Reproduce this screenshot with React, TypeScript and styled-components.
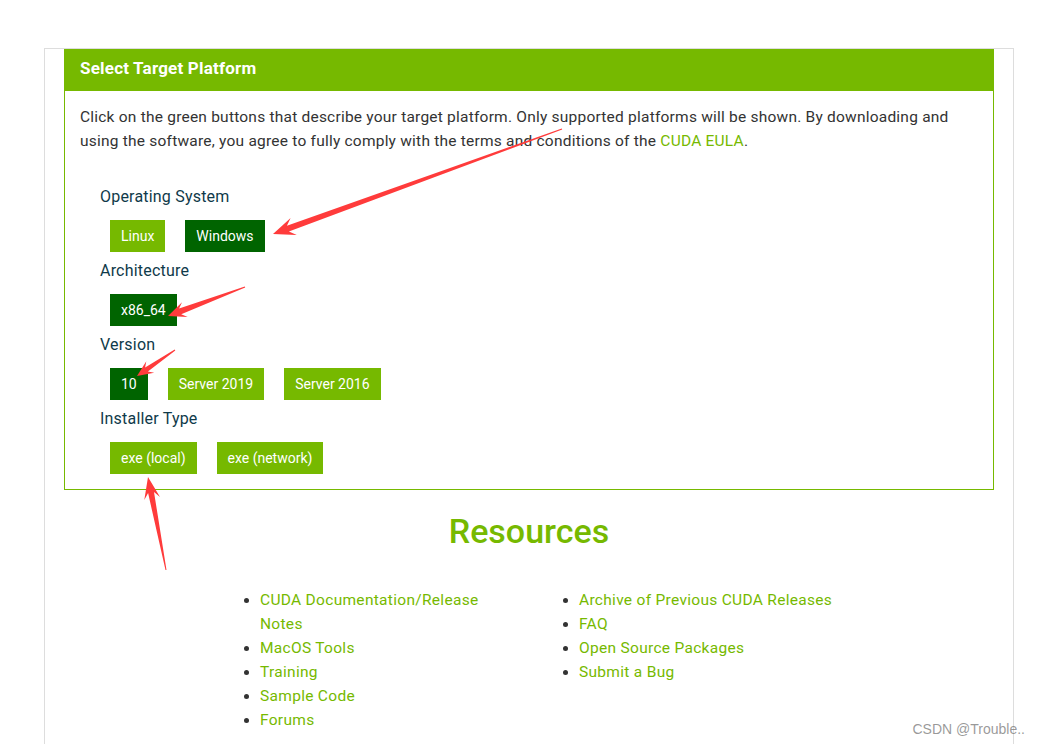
import React from "react";
import styled, { createGlobalStyle } from "styled-components";

// CUDA download page: target platform selector + resources list

const GREEN = "#76b900";
const DARK_GREEN = "#006400";
const FONT = `Roboto, "Liberation Sans", Arial, sans-serif`;

interface Group {
  label: string;
  options: { name: string; selected?: boolean }[];
}

const groups: Group[] = [
  { label: "Operating System", options: [{ name: "Linux" }, { name: "Windows", selected: true }] },
  { label: "Architecture", options: [{ name: "x86_64", selected: true }] },
  {
    label: "Version",
    options: [{ name: "10", selected: true }, { name: "Server 2019" }, { name: "Server 2016" }],
  },
  { label: "Installer Type", options: [{ name: "exe (local)" }, { name: "exe (network)" }] },
];

const leftLinks = ["CUDA Documentation/Release Notes", "MacOS Tools", "Training", "Sample Code", "Forums"];
const rightLinks = ["Archive of Previous CUDA Releases", "FAQ", "Open Source Packages", "Submit a Bug"];

type Pt = [number, number];

// tapered annotation arrow, tail -> tip
const arrowPoints = (tail: Pt, tip: Pt, headLen: number, headW: number, neckW: number, tailW: number) => {
  const dx = tip[0] - tail[0];
  const dy = tip[1] - tail[1];
  const len = Math.hypot(dx, dy);
  const ux = dx / len;
  const uy = dy / len;
  const nx = -uy;
  const ny = ux;
  const at = (base: Pt, back: number, side: number): string =>
    `${(base[0] - ux * back + nx * side).toFixed(1)},${(base[1] - uy * back + ny * side).toFixed(1)}`;
  return [
    at(tail, 0, tailW),
    at(tip, headLen * 0.72, neckW),
    at(tip, headLen, headW),
    at(tip, 0, 0),
    at(tip, headLen, -headW),
    at(tip, headLen * 0.72, -neckW),
    at(tail, 0, -tailW),
  ].join(" ");
};

const arrows: { tail: Pt; tip: Pt; l: number; w: number; s: number }[] = [
  { tail: [562, 129], tip: [273, 234], l: 22, w: 9, s: 3 },
  { tail: [245, 287], tip: [168, 316], l: 18, w: 8, s: 3 },
  { tail: [175, 350], tip: [137, 376], l: 16, w: 7, s: 2.5 },
  { tail: [166, 570], tip: [148, 477], l: 22, w: 8, s: 3 },
];

const App: React.FunctionComponent = () => {
  return (
    <>
      <GlobalStyle />
      <Page>
        <Frame>
          <Panel>
            <PanelHeader>Select Target Platform</PanelHeader>
            <PanelBody>
              <Intro>
                Click on the green buttons that describe your target platform. Only supported platforms will be
                shown. By downloading and using the software, you agree to fully comply with the terms and conditions
                of the <GreenLink>CUDA EULA</GreenLink>.
              </Intro>
              <Groups>
                {groups.map((g) => (
                  <GroupBlock key={g.label}>
                    <GroupLabel>{g.label}</GroupLabel>
                    <ButtonRow>
                      {g.options.map((o) => (
                        <OptionButton key={o.name} selected={!!o.selected}>
                          {o.name}
                        </OptionButton>
                      ))}
                    </ButtonRow>
                  </GroupBlock>
                ))}
              </Groups>
            </PanelBody>
          </Panel>
          <ResourcesTitle>Resources</ResourcesTitle>
          <LinkColumns>
            <LinkList>
              {leftLinks.map((l) => (
                <LinkItem key={l}>{l}</LinkItem>
              ))}
            </LinkList>
            <LinkList>
              {rightLinks.map((l) => (
                <LinkItem key={l}>{l}</LinkItem>
              ))}
            </LinkList>
          </LinkColumns>
        </Frame>
        <Annotations width="1041" height="744" viewBox="0 0 1041 744">
          {arrows.map((a, i) => (
            <polygon key={i} points={arrowPoints(a.tail, a.tip, a.l, a.w, a.s, 0.5)} fill="#ff3b3b" />
          ))}
        </Annotations>
        <Watermark>CSDN @Trouble..</Watermark>
      </Page>
    </>
  );
};

const GlobalStyle = createGlobalStyle`
  html, body {
    margin: 0;
    padding: 0;
    background: #ffffff;
  }
  body {
    font-family: ${FONT};
  }
`;

const Page = styled.div`
  position: relative;
  width: 1041px;
  height: 744px;
  overflow: hidden;
  padding-top: 48px;
  box-sizing: border-box;
`;

const Frame = styled.div`
  margin-left: 44px;
  width: 970px;
  height: 720px;
  box-sizing: border-box;
  border: 1px solid #dddddd;
  border-bottom: none;
  padding: 0 19px;
`;

const Panel = styled.section`
  border: 1px solid ${GREEN};
  border-top: none;
`;

const PanelHeader = styled.h3`
  margin: 0 -1px;
  height: 42px;
  line-height: 38px;
  background: ${GREEN};
  color: #ffffff;
  font-family: ${FONT};
  font-weight: 700;
  font-size: 17px;
  letter-spacing: 0.2px;
  padding-left: 16px;
`;

const PanelBody = styled.div`
  padding: 14px 15px 15px;
`;

const Intro = styled.p`
  margin: 0;
  font-size: 15.5px;
  line-height: 24px;
  color: #333333;
  letter-spacing: 0.22px;
`;

const GreenLink = styled.a`
  color: ${GREEN};
  text-decoration: none;
`;

const Groups = styled.div`
  margin-top: 32px;
  padding-left: 20px;
  display: flex;
  flex-direction: column;
  gap: 7px;
`;

const GroupBlock = styled.div`
  display: flex;
  flex-direction: column;
  gap: 11px;
`;

const GroupLabel = styled.div`
  font-size: 16px;
  line-height: 24px;
  letter-spacing: 0.2px;
  color: #0f3a4a;
`;

const ButtonRow = styled.div`
  display: flex;
  gap: 20px;
  padding-left: 10px;
`;

const OptionButton = styled.div<{ selected: boolean }>`
  height: 32px;
  line-height: 32px;
  padding: 0 11px;
  background: ${(p) => (p.selected ? DARK_GREEN : GREEN)};
  color: #ffffff;
  font-size: 14px;
`;

const ResourcesTitle = styled.h2`
  margin: 21px 0 0;
  text-align: center;
  font-size: 34px;
  line-height: 40px;
  font-weight: 500;
  color: ${GREEN};
`;

const LinkColumns = styled.div`
  margin-top: 37px;
  padding-left: 156px;
  display: grid;
  grid-template-columns: 280px 320px;
  column-gap: 39px;
`;

const LinkList = styled.ul`
  margin: 0;
  padding-left: 40px;
  color: #333333;
`;

const LinkItem = styled.li`
  font-size: 15.5px;
  line-height: 24px;
  letter-spacing: 0.3px;
  color: ${GREEN};

  &::marker {
    color: #333333;
  }
`;

const Annotations = styled.svg`
  position: absolute;
  left: 0;
  top: 0;
  pointer-events: none;
`;

const Watermark = styled.div`
  position: absolute;
  right: 16px;
  bottom: 7px;
  font-family: "Liberation Sans", Arial, sans-serif;
  font-size: 14px;
  color: rgba(120, 120, 120, 0.75);
`;

export default App;
